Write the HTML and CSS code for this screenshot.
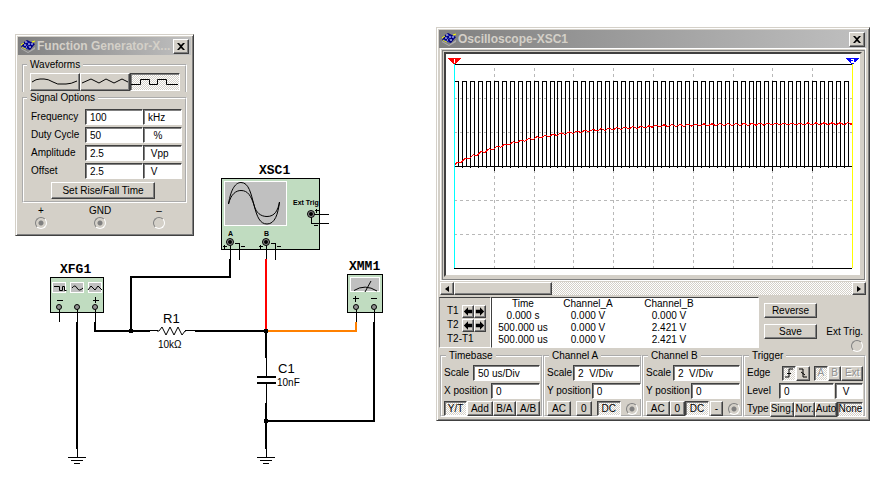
FILE: index.html
```html
<!DOCTYPE html>
<html lang="en">
<head>
<meta charset="utf-8">
<title>RC circuit simulation</title>
<link rel="stylesheet" href="styles.css">
</head>
<body>
<svg width="0" height="0" class="defs" aria-hidden="true">
  <symbol id="logo" viewBox="0 0 16 14">
    <path d="M1 9l7 4 7-5v2l-7 4-7-4z" fill="#b0b0b0"/>
    <path d="M4 3l3-2 8 4-5 6-9-3z" fill="#000080"/>
    <path d="M5 3h2M8 5h2M4 6h2M9 8h2M11 5h2M6 8h1" stroke="#fff"/>
    <path d="M1 6l3-2M2 8l4 2M12 3l3-1" stroke="#ffff00"/>
    <path d="M3 8l5 2M7 3l6 3M5 5l5 3" stroke="#4060ff" stroke-dasharray="1 1"/>
  </symbol>
  <symbol id="cross" viewBox="0 0 8 7"><path d="M0 0h2l2 2 2-2h2L5 3.500 8 7H6L4 5 2 7H0l3-3.500z"/></symbol>
  <symbol id="left" viewBox="0 0 12 10"><path d="M1 5l5-5v3h5v4H6v3z"/></symbol>
  <symbol id="right" viewBox="0 0 12 10"><path d="M11 5L6 0v3H1v4h5v3z"/></symbol>
</svg>
<main class="canvas">
  <svg class="schematic" viewBox="0 0 430 481" role="img" aria-label="RC circuit schematic">
    <g class="body">
      <rect x="50.500" y="277.500" width="53" height="35"/>
      <rect x="221.500" y="178.500" width="98" height="71"/>
      <rect x="347.500" y="274.500" width="35" height="38"/>
    </g>
    <g class="screen">
      <rect x="52.500" y="282.500" width="13" height="10"/>
      <rect x="70.500" y="282.500" width="13" height="10"/>
      <rect x="88.500" y="282.500" width="13" height="10"/>
      <rect x="224.500" y="181.500" width="62" height="44"/>
      <rect x="350.500" y="277.500" width="29" height="14"/>
    </g>
    <g class="thin">
      <path d="M54 286.500h5.500v4h3v-4h2v4h2"/>
      <path d="M72 288q3-4 5 0t6 0"/>
      <path d="M88 290l3-4 4 4 3-4 4 4"/>
      <path d="M228.500 204C231 188 236 182.500 241 182.500C249 182.500 251 194 254 205C257 217 260 224 267 224C275 224 278 214 279.500 202"/>
      <path d="M228.500 204C231 194 236 190.500 241 190.500C248 190.500 251 196 254 205C256 213 261 216.500 267 216.500C275 216.500 278 210 279.500 202"/>
      <path d="M354 290.500q11-7 23 0.500M365 292l6-11"/>
    </g>
    <g class="thin crisp">
      <path d="M57 300.500h6M93 300.500h6M95.500 297v6M353 298.500h6M355.500 296v6M371 298.500h6"/>
      <path d="M59.500 307v15M77.500 307v15M95.500 307v15M356.500 307v15M374.500 307v15"/>
      <path d="M230.500 242v18M235 243.500h4.500v16M266.500 242v18M271 243.500h4.500v16"/>
      <path d="M311 214.500h18M311.500 217v6.500h17.500"/>
      <path d="M223 246.500h4M224.500 245v4M241 246.500h4M259 246.500h4M260.500 245v4M277 246.500h4M315 210.500h4M316.500 209v4M314 225.500h4"/>
      <path d="M149 330.500h9M185 330.500h11M266.500 357v19M266.500 384v20"/>
      <path d="M77.500 448v9M68 457.500h18M71 460.500h12M74 463.500h6"/>
      <path d="M266.500 448v9M257 457.500h18M260 460.500h12M263 463.500h6"/>
    </g>
    <path class="thin" d="M157 331h2l3-4 4 8 4-8 4 8 4-8 4 8 3-4h1"/>
    <g class="wire crisp">
      <path d="M77 322v127M95 322v9h55M131 331v-54h99v-18M195 331h71v27M257 377h19M257 383h19M266 403v46M266 421h108v-99"/>
      <path class="red" d="M266 259v71"/>
      <path class="orange" d="M267 331h89v-9"/>
    </g>
    <g class="crisp">
      <rect x="129" y="329" width="4" height="4"/><rect x="264" y="329" width="4" height="4"/><rect x="264" y="419" width="4" height="4"/>
    </g>
    <g class="pin">
      <circle cx="59" cy="307" r="2.500"/><circle cx="77" cy="307" r="2.500"/><circle cx="95" cy="307" r="2.500"/>
      <circle cx="356" cy="307" r="2.500"/><circle cx="374" cy="307" r="2.500"/>
      <circle cx="230" cy="242" r="3.500"/><circle cx="266" cy="242" r="3.500"/><circle cx="311" cy="214" r="3.500"/>
    </g>
    <circle cx="230" cy="242" r="2"/><circle cx="266" cy="242" r="2"/><circle cx="311" cy="214" r="2"/>
    <g class="ref">
      <text x="60" y="273">XFG1</text>
      <text x="259" y="174">XSC1</text>
      <text x="349" y="270">XMM1</text>
    </g>
    <g class="tiny">
      <text x="228" y="236">A</text><text x="264" y="236">B</text><text x="293" y="205">Ext Trig</text>
    </g>
    <g class="part"><text x="163" y="323">R1</text><text x="278" y="373">C1</text></g>
    <g class="value"><text x="158" y="348">10kΩ</text><text x="277" y="386">10nF</text></g>
  </svg>

  <section class="window generator" aria-label="Function Generator">
    <header class="titlebar">
      <svg class="logo"><use href="#logo"/></svg>
      <h2>Function Generator-X...</h2>
      <button class="btn close" aria-label="Close"><svg><use href="#cross"/></svg></button>
    </header>
    <div class="groups">
      <fieldset>
        <legend>Waveforms</legend>
        <div class="waves">
          <button class="btn" aria-label="Sine"><svg viewBox="0 0 48 14"><path d="M1 7q4-3 8-3h4q4 0 9 3t9 2h4q5 0 11-3"/></svg></button>
          <button class="btn" aria-label="Triangle"><svg viewBox="0 0 48 14"><path d="M1 8l9-4 8 4 7-4 8 4 8-4 6 3"/></svg></button>
          <button class="btn pressed" aria-label="Square"><svg viewBox="0 0 48 14"><path class="square" d="M0 9.500h9.500v-5h9v5h8v-5h9v5H47"/></svg></button>
        </div>
      </fieldset>
      <fieldset class="signal">
        <legend>Signal Options</legend>
        <div class="field"><label for="freq">Frequency</label><input id="freq" value="100"><input class="unit" aria-label="Frequency unit" value="kHz"></div>
        <div class="field"><label for="duty">Duty Cycle</label><input id="duty" value="50"><input class="unit" aria-label="Duty unit" value="  %"></div>
        <div class="field"><label for="amp">Amplitude</label><input id="amp" value="2.5"><input class="unit" aria-label="Amplitude unit" value=" Vpp"></div>
        <div class="field"><label for="off">Offset</label><input id="off" value="2.5"><input class="unit" aria-label="Offset unit" value=" V"></div>
        <button class="btn rise">Set Rise/Fall Time</button>
      </fieldset>
    </div>
    <div class="terminals">
      <label>+<input type="radio" name="plus" checked></label>
      <label>GND<input type="radio" name="gnd" checked></label>
      <label>–<input type="radio" name="minus"></label>
    </div>
  </section>

  <section class="window scope" aria-label="Oscilloscope">
    <header class="titlebar">
      <svg class="logo"><use href="#logo"/></svg>
      <h2>Oscilloscope-XSC1</h2>
      <button class="btn close" aria-label="Close"><svg><use href="#cross"/></svg></button>
    </header>
    <div class="display">
      <svg class="plot" viewBox="446 54 414 221" preserveAspectRatio="none" role="img" aria-label="Channel traces">
        <path class="grid" id="grid"/>
        <path class="trace" d="M454 64.500h398M454 166.500h398M454 268.500h398"/>
        <path class="trace" id="ticks"/>
        <path class="trace" id="square"/>
        <path class="charge" id="charge"/>
        <path class="cursor1" d="M454.500 64v204"/>
        <path class="cursor2" d="M852.500 64v204"/>
        <path class="flag1" d="M448 58h13l-5 6h-3z"/><path class="digit" d="M454.500 59v4"/>
        <path class="flag2" d="M846 58h13l-5 6h-3z"/><path class="digit" d="M851 59.500h2.500v2h-2v1h3"/>
      </svg>
    </div>
    <div class="scroll">
      <button class="btn" aria-label="Scroll left"><svg viewBox="0 0 4 6"><path d="M4 0v6L0 3z"/></svg></button>
      <input type="range" aria-label="Time scroll" value="0">
      <button class="btn" aria-label="Scroll right"><svg viewBox="0 0 4 6"><path d="M0 0v6l4-3z"/></svg></button>
    </div>
    <div class="readout">
      <div class="cursors">
        <div><span>T1</span><button class="btn" aria-label="T1 left"><svg><use href="#left"/></svg></button><button class="btn" aria-label="T1 right"><svg><use href="#right"/></svg></button></div>
        <div><span>T2</span><button class="btn" aria-label="T2 left"><svg><use href="#left"/></svg></button><button class="btn" aria-label="T2 right"><svg><use href="#right"/></svg></button></div>
        <div><span>T2-T1</span></div>
      </div>
      <div class="values">
        <table>
          <thead><tr><th>Time</th><th>Channel_A</th><th>Channel_B</th></tr></thead>
          <tbody>
            <tr><td>0.000 s</td><td>0.000 V</td><td>0.000 V</td></tr>
            <tr><td>500.000 us</td><td>0.000 V</td><td>2.421 V</td></tr>
            <tr><td>500.000 us</td><td>0.000 V</td><td>2.421 V</td></tr>
          </tbody>
        </table>
      </div>
      <div class="actions">
        <button class="btn">Reverse</button>
        <button class="btn">Save</button>
      </div>
      <label class="ext">Ext Trig.<input type="radio" name="ext"></label>
    </div>
    <div class="controls">
      <fieldset>
        <legend>Timebase</legend>
        <div class="field"><label for="tscale">Scale</label><input id="tscale" value="50 us/Div"></div>
        <div class="field"><label for="xpos">X position</label><input id="xpos" value="0"></div>
        <div class="row"><button class="btn pressed">Y/T</button><button class="btn">Add</button><button class="btn">B/A</button><button class="btn">A/B</button></div>
      </fieldset>
      <fieldset>
        <legend>Channel A</legend>
        <div class="field"><label for="ascale">Scale</label><input id="ascale" value="2  V/Div"></div>
        <div class="field"><label for="apos">Y position</label><input id="apos" value="0"></div>
        <div class="row spaced"><button class="btn">AC</button><button class="btn">0</button><button class="btn pressed">DC</button><input type="radio" name="cha" aria-label="Channel A terminal" checked></div>
      </fieldset>
      <fieldset>
        <legend>Channel B</legend>
        <div class="field"><label for="bscale">Scale</label><input id="bscale" value="2  V/Div"></div>
        <div class="field"><label for="bpos">Y position</label><input id="bpos" value="0"></div>
        <div class="row"><button class="btn">AC</button><button class="btn">0</button><button class="btn pressed">DC</button><button class="btn minus">-</button><input type="radio" name="chb" aria-label="Channel B terminal" checked></div>
      </fieldset>
      <fieldset class="trigger">
        <legend>Trigger</legend>
        <div class="field"><span class="name">Edge</span>
          <div class="row edges"><button class="btn pressed" aria-label="Rising edge"><svg viewBox="0 0 10 10"><path d="M1 9h4V1h4M3 5.500h4"/></svg></button><button class="btn" aria-label="Falling edge"><svg viewBox="0 0 10 10"><path d="M1 1h4v8h4M3 4l4 3"/></svg></button></div>
          <div class="row sources"><button class="btn pressed" disabled>A</button><button class="btn" disabled>B</button><button class="btn" disabled>Ext</button></div>
        </div>
        <div class="field"><label class="name" for="level">Level</label><input id="level" value="0"><input class="unit" aria-label="Level unit" value=" V"></div>
        <div class="field"><span>Type</span><div class="row types"><button class="btn">Sing.</button><button class="btn">Nor.</button><button class="btn">Auto</button><button class="btn pressed">None</button></div></div>
      </fieldset>
    </div>
  </section>
</main>
<script src="plot.js"></script>
</body>
</html>
```
FILE: styles.css
```css
* { box-sizing: border-box; }
body { margin: 0; background: #fff; color: #000; font: 10px/12px "Liberation Sans", Arial, sans-serif; }
button, input { font: inherit; color: inherit; margin: 0; }
.defs { position: absolute; }
.canvas { position: relative; min-width: 880px; }

.schematic { display: block; width: 430px; }
.schematic .body rect { fill: #c0dcc0; stroke: #000; }
.schematic .screen rect { fill: #c0c0c0; stroke: #fff; }
.thin { fill: none; stroke: #000; }
.crisp { shape-rendering: crispEdges; }
.wire { fill: none; stroke: #000; stroke-width: 2; }
.red { stroke: #f00; }
.orange { stroke: #ff8000; }
.pin circle { fill: #909090; stroke: #000; }
.ref { font: bold 13px "Liberation Mono", monospace; }
.tiny { font-size: 7px; font-weight: bold; }
.part { font-size: 13px; }
.value { font-size: 10px; }

.window { position: absolute; background: #d4d0c8; border: 1px solid; border-color: #d4d0c8 #404040 #404040 #d4d0c8; box-shadow: inset 1px 1px #fff, inset -1px -1px #808080; padding: 2px; }
.generator { left: 15px; top: 34px; width: 179px; min-height: 202px; }
.scope { left: 436px; right: 22px; top: 27px; min-height: 394px; }

.titlebar { display: flex; align-items: center; height: 18px; padding: 0 2px; background: linear-gradient(90deg, #808080, #c0c0c0); color: #d4d0c8; }
.titlebar h2 { flex: 1; margin: 0 0 0 1px; font: bold 12px/16px "Liberation Sans", Arial, sans-serif; white-space: nowrap; }
.logo { width: 16px; height: 14px; }

.btn { display: flex; align-items: center; justify-content: center; padding: 0; border: 1px solid; border-color: #fff #404040 #404040 #fff; border-radius: 0; background: #d4d0c8; box-shadow: inset -1px -1px #808080; white-space: nowrap; }
.btn svg { display: block; }
.pressed, .scroll input { background: repeating-conic-gradient(#fff 0 25%, #d4d0c8 0 50%) 0 0 / 2px 2px; }
.pressed { border-color: #404040 #fff #fff #404040; box-shadow: inset 1px 1px #808080; }
.btn:disabled { color: #909090; text-shadow: 1px 1px #fff; }
.close { width: 16px; height: 15px; flex: none; }
.close svg { width: 8px; height: 7px; }

fieldset { margin: 0; min-width: 0; border: 2px groove #fff; padding: 0 3px; }
legend { margin-left: 2px; padding: 0 3px; }
.field { display: flex; align-items: center; }
.field input { flex: 1; min-width: 0; width: 0; height: 16px; padding: 0 4px; border: 1px solid; border-color: #404040 #fff #fff #404040; border-radius: 0; background: #fff; box-shadow: inset 1px 1px #808080; white-space: pre; }
.field .unit { flex: none; }

input[type="radio"] { appearance: none; flex: none; width: 12px; height: 12px; border: 1px solid; border-color: #808080 #fff #fff #808080; border-radius: 50%; }
input[type="radio"]:checked { background: radial-gradient(#808080 0 2px, transparent 3px); }

.groups { padding: 4px 4px 0; }
.groups fieldset:first-child { border-bottom: 0; height: 33px; }
.groups fieldset:first-child legend { margin-left: 0; }
.waves { display: grid; grid-template-columns: repeat(3, 50px); justify-content: center; padding-top: 2px; }
.waves .btn { height: 18px; }
.waves svg { width: 48px; height: 14px; fill: none; stroke: #000; }
.signal { height: 111px; padding: 4px 3px 0 7px; }
.signal legend { margin-left: -4px; }
.signal .field { height: 18px; }
.signal label { width: 54px; }
.signal .unit { width: 39px; }
.rise { width: 104px; height: 17px; margin: 2px 0 0 20px; }
.terminals { display: grid; grid-template-columns: repeat(3, 59px); justify-content: center; padding: 2px 9px 0 0; }
.terminals label { display: flex; flex-direction: column; align-items: center; }

.display { height: 233px; padding: 3px; border: 1px solid #fff; box-shadow: inset 1px 1px #d4d0c8, inset 2px 2px #808080, inset -1px -1px #808080; margin: 0 1px; }
.plot { display: block; width: 100%; height: 225px; background: #fff; border: 2px solid; border-color: #404040 #d4d0c8 #d4d0c8 #404040; }
.plot path { fill: none; shape-rendering: crispEdges; }
.plot .grid { stroke: #b8b8b8; stroke-dasharray: 3 3; }
.trace { stroke: #000; }
.charge { stroke: #f00; }
.cursor1 { stroke: #0ff; }
.cursor2 { stroke: #ff0; }
.plot .flag1 { fill: #f00; }
.plot .flag2 { fill: #00f; }
.digit { stroke: #fff; }

.scroll { display: flex; height: 13px; margin: 1px 1px 2px; }
.scroll .btn { width: 14px; flex: none; }
.scroll .btn svg { width: 4px; height: 6px; }
.scroll input { appearance: none; flex: 1; min-width: 0; height: 13px; }
.scroll input::-webkit-slider-thumb { appearance: none; width: 98px; height: 13px; background: #d4d0c8; border: 1px solid; border-color: #fff #404040 #404040 #fff; box-shadow: inset -1px -1px #808080; }

.readout { display: flex; height: 51px; }
.cursors { width: 52px; padding: 6px 0 0 7px; border: 1px solid; border-color: #404040 #fff #fff #808080; }
.cursors div { display: flex; height: 14px; align-items: center; }
.cursors span { width: 15px; white-space: nowrap; }
.cursors .btn { width: 12px; height: 13px; }
.cursors svg { width: 10px; height: 9px; }
.values { flex: 1; max-width: 268px; background: #fff; border: 1px solid; border-color: #404040 #fff #fff #404040; }
table { width: 100%; max-width: 224px; border-collapse: collapse; table-layout: fixed; }
th, td { padding: 0; font-weight: normal; text-align: center; }
th:first-child { width: 62px; }
th:nth-child(2) { width: 68px; }
th:nth-child(3) { width: 94px; }
.actions { display: flex; flex-direction: column; gap: 6px; padding: 6px 0 0 5px; }
.actions .btn { width: 53px; height: 15px; }
.ext { display: flex; flex-direction: column; align-items: flex-end; gap: 2px; margin-left: auto; padding: 29px 4px 0 0; }

.controls { display: grid; grid-template-columns: 103fr 99fr 101fr 123fr; margin: 2px 1px 0; }
.controls fieldset { padding: 2px 1px 0 2px; height: 67px; }
.controls .field { justify-content: space-between; gap: 1px; height: 18px; }
.controls .field label { flex: none; }
.controls .field input { flex: none; width: 49px; }
.controls #tscale, .controls #ascale, .controls #bscale { width: 67px; }
.row { display: flex; align-items: center; }
.controls .btn { height: 15px; flex: 1 1 auto; min-width: 0; }
.controls .row { margin-top: 1px; }
.controls .spaced { gap: 5px; padding-right: 1px; }
.controls .minus { margin: 0 5px 0 1px; }
.controls .trigger .name { width: 31px; flex: none; }
.controls .field .row { margin: 0; }
.controls .edges { width: 28px; }
.edges svg { width: 10px; height: 10px; fill: none; stroke: #000; }
.controls .sources { width: 49px; }
.types { flex: 1; }
.controls .trigger #level { flex: 1; }
.controls .field .unit { width: 28px; }
```
FILE: plot.js
```js
// Traces of the scope display, in plot units (x 454..852, zero volts at y 166).
const left = 454, right = 852, zero = 166.5, high = 81.5, period = 7.96;

let grid = "";
for (let i = 1; i < 10; i++) grid += `M${Math.round(left + i * 39.8) + 0.5} 68V268`;
for (const y of [98.5, 132.5, 200.5, 234.5]) grid += `M${left} ${y}H${right}`;
document.getElementById("grid").setAttribute("d", grid);

let square = `M${left} ${high}`, ticks = "";
for (let i = 0; i < 50; i++) {
  const fall = Math.round(left + (i + 0.5) * period) + 0.5;
  const rise = Math.round(left + (i + 1) * period) + 0.5;
  square += `H${fall}V${zero}H${rise}` + (i < 49 ? `V${high}` : "");
  ticks += `M${rise} 166v${(i + 1) % 5 ? 2 : 5}`;
}
document.getElementById("square").setAttribute("d", square);
document.getElementById("ticks").setAttribute("d", ticks);

// RC charging: the input alternates between 5 V and 0 V each half period.
let level = 0, charge = `M${left} 165.5`;
for (let x = 1; x <= right - left; x++) {
  const target = (x % period) < period / 2 ? 84 : 0;
  level += (target - level) / 78;
  charge += `L${left + x} ${(165.5 - level).toFixed(1)}`;
}
document.getElementById("charge").setAttribute("d", charge);
```
